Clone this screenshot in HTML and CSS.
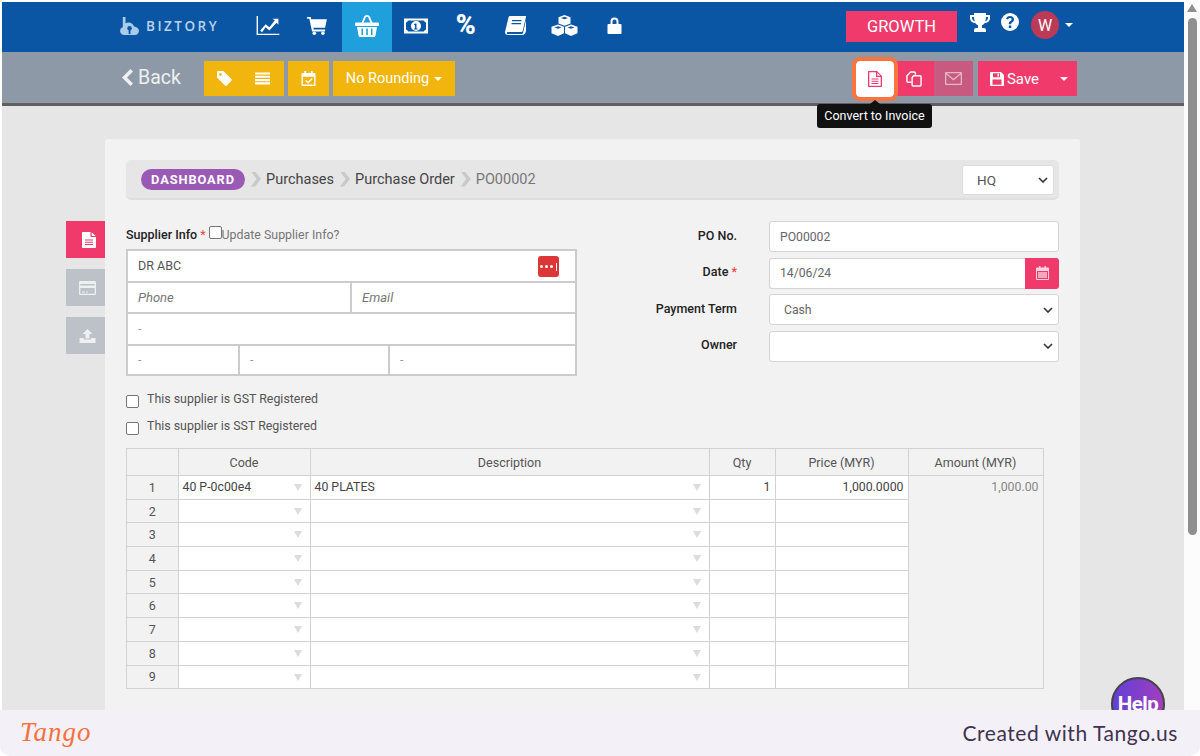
FILE: index.html
```html
<!DOCTYPE html>
<html lang="en">
<head>
<meta charset="utf-8">
<title>Purchase Order PO00002</title>
<link rel="stylesheet" href="styles.css">
</head>
<body>
<div class="frame">
  <div class="viewport">
    <div class="app">
      <header class="topbar">
        <div class="brand">
          <svg class="brand-mark" viewBox="0 0 22 20"><path d="M3 0h3v7a6.500 6.500 0 0 1 9.500 3.500c3 .3 5.500 2.300 5.500 4.800 0 2.500-2 4.700-4.500 4.700h-12C2 20 0 18 0 15.500c0-2 1.300-3.500 3-4z" fill="#a9cde9"/><circle cx="10.500" cy="12.500" r="2.500" fill="#0a56a4"/><path d="M9.500 13.500h2V19h-2z" fill="#0a56a4"/></svg>
          <span class="brand-name">BIZTORY</span>
        </div>
        <nav class="nav">
          <a class="nav-item"><svg class="ic" viewBox="0 0 26 22"><path d="M1 0h1.500v19.500H26V21H1z"/><path d="M5 16l6-7 4 3.500L21 5l-2.500-2H25v6.500L23 7.500l-8 8.500-4-3.500L7 18z"/></svg></a>
          <a class="nav-item"><svg class="ic ic-cart" viewBox="0 0 22 20"><path d="M0 0h4l.7 2.500H22l-2 9.500H7l.4 2H20v2H5.500L2.500 2H0z"/><circle cx="8" cy="18" r="2"/><circle cx="17.500" cy="18" r="2"/></svg></a>
          <a class="nav-item is-active"><svg class="ic ic-basket" viewBox="0 0 24 22"><path d="M6 9l3-7c.5-1 1-2 3-2s2.500 1 3 2l3 7h-2l-2.700-6.500c-.3-.6-.6-.7-1.300-.7s-1 .1-1.300.7L8 9z"/><rect y="7.500" width="24" height="3.500" rx="1"/><path d="M2 12h20l-1.500 8.500c-.2 1-.8 1.500-1.800 1.500H5.300c-1 0-1.600-.5-1.800-1.500zM6.500 13.500v6.500h1.500v-6.500zM11.200 13.500v6.500h1.600v-6.500zM16 13.500v6.500h1.500v-6.500z" fill-rule="evenodd"/></svg></a>
          <a class="nav-item"><svg class="ic ic-money" viewBox="0 0 24 15"><path d="M0 0h24v15H0zM2 4v7a2.500 2.500 0 0 1 2 2h16a2.500 2.500 0 0 1 2-2V4a2.500 2.500 0 0 1-2-2H4a2.500 2.500 0 0 1-2 2zM12 2.500a5 5 0 1 1 0 10 5 5 0 0 1 0-10zM11.500 5l-1.500.8v1l1-.4V10h-1v1h3.500v-1h-1V5z" fill-rule="evenodd"/></svg></a>
          <a class="nav-item"><span class="percent">%</span></a>
          <a class="nav-item"><svg class="ic ic-book" viewBox="0 0 21 19"><path d="M5 0h15.500c.4 0 .6.300.5.700l-3.300 14.300c-.2.700-.7 1-1.300 1H3c-.7 0-1.200.5-1.200 1s.5 1 1.200 1h13.500c.8 0 1.300-.3 1.500-1L21 4v11c-.3 2-1.500 4-4 4H3c-2 0-3-1.200-3-2.800 0-.5.100-1 .3-1.500L3.500 1.500C3.800.6 4.300 0 5 0zM7 4v1.300h9.500V4zM6.500 7v1.300H16V7z" fill-rule="evenodd"/></svg></a>
          <a class="nav-item"><svg class="ic ic-cubes" viewBox="0 0 26 21"><path d="M13 0l6 2.300v6.200l-6 2.300-6-2.300V2.300zM13 1.700l-3.500 1.200L13 4.200l3.500-1.300zM6.500 9.500l6 2.300v6.400L6.500 21 0 18.200v-6.400zM6.500 11.200L3 12.500l3.500 1.300 3.500-1.300zM19.500 9.500l6.500 2.300v6.400L19.500 21l-6-2.800v-6.400zM19.500 11.200L16 12.500l3.500 1.300 3.500-1.300z" fill-rule="evenodd"/></svg></a>
          <a class="nav-item"><svg class="ic ic-lock" viewBox="0 0 14 17"><path d="M3 7V4.500a4 4 0 0 1 8 0V7h2c.6 0 1 .4 1 1v8c0 .6-.4 1-1 1H1c-.6 0-1-.4-1-1V8c0-.6.4-1 1-1zm2 0h4V4.500a2 2 0 0 0-4 0z" fill-rule="evenodd"/></svg></a>
        </nav>
        <div class="account">
          <span class="plan">GROWTH</span>
          <svg class="ic ic-trophy" viewBox="0 0 20 19"><path d="M4 0h12v2h4v3c0 3-2.500 5-5.500 5.300-.6 1-1.400 1.600-2.500 2V15h2c1 0 2 .7 2 2v2H4v-2c0-1.300 1-2 2-2h2v-2.700c-1.100-.4-1.900-1-2.500-2C2.500 10 0 8 0 5V2h4zM2 4v1c0 1.500 1.200 2.800 2.800 3.200C4.300 7 4 5.500 4 4zm14 0c0 1.500-.3 3-.8 4.200C16.800 7.800 18 6.500 18 5V4z" fill-rule="evenodd"/></svg>
          <svg class="ic ic-help" viewBox="0 0 18 18"><path d="M9 0a9 9 0 1 1 0 18A9 9 0 0 1 9 0zM7.800 12.500v2.500h2.500v-2.500zM9 3C6.800 3 5.500 4.200 5 5.800l2 .8c.3-.9.900-1.500 1.900-1.500s1.600.5 1.600 1.300c0 .7-.5 1.100-1.200 1.600-1 .7-1.500 1.400-1.500 2.600v.6h2.400v-.4c0-.6.300-.9.900-1.300 1-.7 1.900-1.500 1.900-3C13 4.300 11.300 3 9 3z" fill-rule="evenodd"/></svg>
          <span class="avatar">W</span>
          <span class="caret caret-light"></span>
        </div>
      </header>

      <div class="toolbar">
        <a class="back"><svg class="back-chev" viewBox="0 0 11 17"><path d="M8.500 0L11 2.500 5 8.500l6 6L8.500 17 0 8.500z"/></svg>Back</a>
        <div class="tool-group">
          <span class="btn btn-yellow btn-pair">
            <svg class="ic-sm" viewBox="0 0 14 14"><path d="M0 1c0-.6.400-1 1-1h5l7.500 7.500c.5.500.5 1.200 0 1.700l-4.300 4.300c-.5.500-1.200.5-1.700 0L0 6zm3.200 1a1.300 1.300 0 1 0 0 2.600 1.300 1.300 0 0 0 0-2.600z" fill-rule="evenodd"/></svg>
            <svg class="ic-sm" viewBox="0 0 16 13"><path d="M0 0h16v2.300H0zM0 3.500h16v2.300H0zM0 7h16v2.300H0zM0 10.500h16V13H0z"/></svg>
          </span>
          <span class="btn btn-yellow btn-cal">
            <svg class="ic-sm" viewBox="0 0 15 16"><path d="M3 0h2v2h5V0h2v2h2c.6 0 1 .4 1 1v12c0 .6-.4 1-1 1H1c-.6 0-1-.4-1-1V3c0-.6.4-1 1-1h2zM1.500 6v8.500h12V6zM11 7.500l1 1-5 5-3-3 1-1 2 2z" fill-rule="evenodd"/></svg>
          </span>
          <span class="btn btn-yellow btn-round">No Rounding<span class="caret caret-light"></span></span>
        </div>
        <div class="action-group">
          <span class="btn btn-convert">
            <svg class="ic-doc" viewBox="0 0 14 16"><path d="M1 0h8l5 5v10c0 .6-.4 1-1 1H1c-.6 0-1-.4-1-1V1c0-.6.4-1 1-1zm.3 1.300v13.400h11.400V6H8V1.300zM9.300 1.800v3h3zM3.500 7.500h7v1h-7zM3.500 9.700h7v1h-7zM3.500 12h7v1h-7z" fill-rule="evenodd"/></svg>
          </span>
          <span class="btn btn-copy">
            <svg class="ic-copy" viewBox="0 0 17 17"><path d="M10 4V2.500A1.500 1.500 0 0 0 8.500 1H5L1 5v6a1 1 0 0 0 1 1h4"/><path d="M11 5H8L6.500 7v8a1 1 0 0 0 1 1H15a1 1 0 0 0 1-1V6a1 1 0 0 0-1-1z"/></svg>
          </span>
          <span class="btn btn-mail">
            <svg class="ic-mail" viewBox="0 0 17 13"><path d="M1 0h15c.6 0 1 .4 1 1v11c0 .6-.4 1-1 1H1c-.6 0-1-.4-1-1V1c0-.6.4-1 1-1zm.8 1.300L8.500 6.800l6.700-5.500zM1.300 2.500v9.200h14.400V2.500L8.500 8.500z" fill-rule="evenodd"/></svg>
          </span>
          <span class="btn btn-save">
            <svg class="ic-save" viewBox="0 0 14 14"><path d="M1 0h10l3 3v10c0 .6-.4 1-1 1H1c-.6 0-1-.4-1-1V1c0-.6.4-1 1-1zm2 1.200v4h7v-4zM7.500 1.800h1.500v2.800H7.500zM2.500 7.500v5.300h9V7.500z" fill-rule="evenodd"/></svg>Save
          </span>
          <span class="btn btn-save-more"><span class="caret caret-light"></span></span>
        </div>
        <div class="tooltip">Convert to Invoice</div>
      </div>

      <main class="stage">
        <aside class="side-tabs">
          <span class="side-tab is-on"><svg class="ic-side" viewBox="0 0 14 16"><path d="M1 0h7.500v5H14v10c0 .6-.4 1-1 1H1c-.6 0-1-.4-1-1V1c0-.6.4-1 1-1zm8.700.3L13.700 4H9.700zM3 7.500v1h8v-1zM3 9.700v1h8v-1zM3 12v1h8v-1z" fill-rule="evenodd"/></svg></span>
          <span class="side-tab"><svg class="ic-side ic-card" viewBox="0 0 17 14"><path d="M1.500 0h14c.8 0 1.500.7 1.500 1.500v11c0 .8-.7 1.500-1.500 1.500h-14C.7 14 0 13.300 0 12.500v-11C0 .7.700 0 1.500 0zM1.300 3v1.500h14.400V3zM1.300 7v5.700h14.400V7zM3 10.500h3v1H3zM7 10.500h2v1H7z" fill-rule="evenodd"/></svg></span>
          <span class="side-tab"><svg class="ic-side ic-card" viewBox="0 0 16 14"><path d="M8 0l5 5h-3v4.500H6V5H3zM0 9h4.500v1.500h7V9H16v5H0z"/></svg></span>
        </aside>
        <section class="card">
          <div class="crumbs">
            <span class="pill">DASHBOARD</span>
            <span class="sep"></span><span class="crumb">Purchases</span>
            <span class="sep"></span><span class="crumb">Purchase Order</span>
            <span class="sep"></span><span class="crumb crumb-cur">PO00002</span>
            <span class="branch">HQ<svg class="chev" viewBox="0 0 10 6"><path d="M1 1l4 4 4-4" /></svg></span>
          </div>

          <div class="form-row">
            <div class="supplier">
              <div class="supplier-head">
                <b class="lbl">Supplier Info</b><span class="req">*</span><span class="check check-tight"></span><span class="hint">Update Supplier Info?</span>
              </div>
              <div class="sbox">
                <div class="srow srow-top"><span class="scell">DR ABC</span><span class="dots"><i></i><i></i><i></i><u></u></span></div>
                <div class="srow"><span class="scell ph w-phone">Phone</span><span class="scell ph">Email</span></div>
                <div class="srow"><span class="scell dash">-</span></div>
                <div class="srow srow-last"><span class="scell dash w-a">-</span><span class="scell dash w-b">-</span><span class="scell dash">-</span></div>
              </div>
              <label class="reg reg-first"><span class="check"></span><span>This supplier is GST Registered</span></label>
              <label class="reg"><span class="check"></span><span>This supplier is SST Registered</span></label>
            </div>
            <div class="meta">
              <div class="meta-row"><b class="lbl meta-lbl">PO No.</b><span class="field">PO00002</span></div>
              <div class="meta-row"><b class="lbl meta-lbl">Date <span class="req">*</span></b><span class="field field-date">14/06/24</span><span class="addon"><svg viewBox="0 0 13 14"><path d="M3 0h1.500v1.500h4V0H10v1.500h2c.6 0 1 .4 1 1V13c0 .6-.4 1-1 1H1c-.6 0-1-.4-1-1V2.500c0-.6.4-1 1-1h2zM1 5v8h11V5z" fill-rule="evenodd"/><path d="M2 6h9v6H2z" opacity=".7"/></svg></span></div>
              <div class="meta-row"><b class="lbl meta-lbl">Payment Term</b><span class="field field-sel">Cash<svg class="chev" viewBox="0 0 10 6"><path d="M1 1l4 4 4-4" /></svg></span></div>
              <div class="meta-row"><b class="lbl meta-lbl">Owner</b><span class="field field-sel"><svg class="chev" viewBox="0 0 10 6"><path d="M1 1l4 4 4-4" /></svg></span></div>
            </div>
          </div>

          <table class="grid">
            <thead>
              <tr><th class="c-no"></th><th class="c-code">Code</th><th class="c-desc">Description</th><th class="c-qty">Qty</th><th class="c-price">Price (MYR)</th><th class="c-amt">Amount (MYR)</th></tr>
            </thead>
            <tbody>
              <tr><td class="no">1</td><td class="dd">40 P-0c00e4</td><td class="dd">40 PLATES</td><td class="num">1</td><td class="num">1,000.0000</td><td class="amt" rowspan="9">1,000.00</td></tr>
              <tr><td class="no">2</td><td class="dd"></td><td class="dd"></td><td></td><td></td></tr>
              <tr><td class="no">3</td><td class="dd"></td><td class="dd"></td><td></td><td></td></tr>
              <tr><td class="no">4</td><td class="dd"></td><td class="dd"></td><td></td><td></td></tr>
              <tr><td class="no">5</td><td class="dd"></td><td class="dd"></td><td></td><td></td></tr>
              <tr><td class="no">6</td><td class="dd"></td><td class="dd"></td><td></td><td></td></tr>
              <tr><td class="no">7</td><td class="dd"></td><td class="dd"></td><td></td><td></td></tr>
              <tr><td class="no">8</td><td class="dd"></td><td class="dd"></td><td></td><td></td></tr>
              <tr><td class="no">9</td><td class="dd"></td><td class="dd"></td><td></td><td></td></tr>
            </tbody>
          </table>
        </section>
        <div class="help-bubble">Help</div>
      </main>
    </div>
    <div class="scrollbar"><span class="sb-up"></span><span class="sb-thumb"></span></div>
  </div>
  <footer class="tango">
    <span class="tango-logo">Tango</span>
    <span class="tango-note">Created with Tango.us</span>
  </footer>
</div>
</body>
</html>
```

FILE: styles.css
```css
* { box-sizing: border-box; }
html, body { margin: 0; height: 100%; overflow: hidden; }
body { background: #fff; font-family: Roboto, "Liberation Sans", sans-serif; color: #333; }

.frame { height: 756px; display: flex; flex-direction: column; }
.viewport { height: 710px; display: flex; padding: 2px 0 0 2px; overflow: hidden; flex: none; }
.app { width: 1182px; flex: none; display: flex; flex-direction: column; position: relative; }

/* scrollbar */
.scrollbar { width: 16px; background: #fcfcfc; display: flex; flex-direction: column; align-items: center; flex: none; margin-top: -2px; padding-top: 4px; }
.sb-up { width: 0; height: 0; border-left: 5px solid transparent; border-right: 5px solid transparent; border-bottom: 8px solid #8f8f8f; }
.sb-thumb { width: 9px; height: 517px; margin-top: 6px; background: #8f8f8f; border-radius: 5px; }

/* top bar */
.topbar { height: 50px; background: #0a56a4; display: flex; align-items: center; padding-left: 118px; flex: none; }
.brand { width: 123px; display: flex; align-items: center; gap: 6px; padding-bottom: 3px; }
.brand-mark { width: 20px; height: 18px; }
.brand-name { font-family: "Open Sans", sans-serif; font-size: 13.500px; font-weight: 600; letter-spacing: 2.500px; color: #b8d4ec; }
.nav { display: flex; height: 100%; }
.nav-item { width: 49.500px; height: 100%; display: flex; align-items: center; justify-content: center; padding-bottom: 3px; }
.nav-item.is-active { background: #1f9fdb; }
.ic { width: 25px; height: 20px; fill: #fff; }
.ic-cart { width: 20px; height: 18px; }
.ic-basket { width: 24px; height: 22px; }
.ic-money { width: 24px; height: 16px; }
.ic-book { width: 21px; height: 19px; }
.ic-cubes { width: 27px; height: 21px; }
.ic-lock { width: 15px; height: 17px; }
.percent { font-family: Roboto, sans-serif; font-size: 27px; font-weight: 900; color: #fff; line-height: 1; }
.account { margin-left: auto; display: flex; align-items: center; margin-right: 111px; }
.plan { width: 111px; height: 31px; background: #ef3a6b; color: #fff; font-size: 16.500px; display: flex; align-items: center; justify-content: center; margin-top: -2px; margin-right: 13px; }
.ic-trophy { width: 20px; height: 19px; margin-right: 11px; margin-top: -10px; }
.ic-help { width: 18px; height: 18px; margin-right: 12px; margin-top: -10px; }
.avatar { width: 28px; height: 28px; border-radius: 50%; background: #bd3a57; color: #fff; font-size: 16px; display: flex; align-items: center; justify-content: center; margin-top: -4px; }
.caret { display: inline-block; width: 0; height: 0; border-left: 4px solid transparent; border-right: 4px solid transparent; border-top: 4px solid #fff; margin-left: 5px; }
.account .caret { margin-left: 6px; margin-top: -4px; }

/* tool bar */
.toolbar { height: 54px; background: #8d99a6; border-bottom: 3px solid #5f5f5f; display: flex; align-items: flex-start; padding: 9px 107px 0 120px; position: relative; flex: none; }
.back { width: 82px; display: flex; align-items: center; gap: 5px; font-size: 19.500px; color: #eef0f2; height: 33px; }
.back-chev { width: 11px; height: 17px; fill: #eef0f2; }
.tool-group { display: flex; gap: 4px; }
.btn { height: 35px; display: flex; align-items: center; justify-content: center; color: #fff; fill: #fff; font-size: 14px; }
.btn-yellow { background: #f2b50d; }
.btn-pair { width: 80px; justify-content: space-between; padding: 0 14px 0 13px; }
.btn-cal { width: 41px; }
.btn-round { width: 122px; font-size: 14.500px; }
.ic-sm { width: 15px; height: 15px; }
.action-group { display: flex; margin-left: auto; position: relative; }
.btn-convert { width: 38px; height: 36px; background: #fff; outline: 4px solid #f9743f; outline-offset: 0; border-radius: 4px; position: relative; z-index: 1; }
.ic-doc { width: 14px; height: 16px; fill: #ef3a6b; }
.btn-copy { width: 40px; background: #ef3a6b; }
.ic-copy { width: 16px; height: 16px; fill: none; stroke: #fff; stroke-width: 1.500; }
.btn-mail { width: 39px; background: #c85a80; }
.ic-mail { width: 17px; height: 13px; fill: #e4b6c6; }
.btn-save { width: 71px; background: #ef3a6b; margin-left: 5px; gap: 3px; font-size: 15px; padding-left: 2px; }
.ic-save { width: 14px; height: 14px; }
.btn-save-more { width: 28px; background: #ef3a6b; padding-left: 1px; }
.btn-save-more .caret { margin: 0; }
.tooltip { position: absolute; left: 815px; top: 52px; width: 115px; height: 24px; background: #111; color: #fff; font-size: 12.500px; border-radius: 3px; display: flex; align-items: center; justify-content: center; z-index: 2; padding-bottom: 2px; }
.tooltip::before { content: ""; position: absolute; left: 53px; top: -4px; width: 0; height: 0; border-left: 5px solid transparent; border-right: 5px solid transparent; border-bottom: 4px solid #111; }

/* stage */
.stage { flex: 1; background: #e6e6e6; display: flex; align-items: flex-start; padding: 33px 0 0 64px; position: relative; overflow: hidden; }
.side-tabs { width: 39px; margin-top: 82px; display: flex; flex-direction: column; gap: 11px; flex: none; }
.side-tab { height: 37px; background: #bcc2c8; display: flex; align-items: center; justify-content: flex-end; padding-right: 9px; }
.side-tab.is-on { background: #ef3a6b; }
.ic-side { width: 14px; height: 16px; fill: #fff; }
.ic-card { width: 17px; height: 14px; fill: #eef0f2; }
.card { width: 975px; height: 640px; flex: none; background: #f2f2f2; border-radius: 3px 3px 0 0; padding: 21px 21px 0; }

.crumbs { height: 40px; background: #e6e6e6; border-radius: 5px; border-bottom: 2px solid #dfdfdf; display: flex; align-items: center; padding: 0 5px 0 15px; }
.pill { width: 104px; height: 21px; background: #9b59b6; color: #fff; border-radius: 11px; font-size: 12.800px; font-weight: 700; letter-spacing: .9px; display: flex; align-items: center; justify-content: center; }
.sep { width: 10px; height: 15px; margin: 0 5px 0 6px; background: #c9c9c9; clip-path: polygon(0 0, 40% 0, 100% 50%, 40% 100%, 0 100%, 55% 50%); }
.crumb { font-size: 14.500px; color: #444; }
.crumb-cur { color: #777; }
.branch { margin-left: auto; margin-top: 2px; width: 92px; height: 30px; background: #fff; border: 1px solid #dcdcdc; border-radius: 3px; font-size: 13.500px; color: #555; display: flex; align-items: center; justify-content: space-between; padding: 0 5px 0 14px; }
.chev { width: 10px; height: 6px; fill: none; stroke: #333; stroke-width: 1.600; margin-left: auto; }

.form-row { display: flex; justify-content: space-between; margin-top: 21px; }
.supplier { width: 451px; }
.supplier-head { height: 26px; margin-bottom: 2px; display: flex; align-items: center; }
.lbl { font-size: 12.500px; font-weight: 500; color: #222; }
.req { color: #e44; font-size: 12.500px; margin-left: 3px; }
.hint { font-size: 12.400px; color: #777; }
.check { width: 13px; height: 13px; border: 1px solid #767676; border-radius: 2px; background: #fff; display: inline-block; flex: none; }
.check-tight { margin-left: 3px; margin-top: -4px; }

.sbox { border: 2px solid #ccc; background: #fff; }
.srow { height: 31.500px; display: flex; border-bottom: 2px solid #ccc; align-items: stretch; position: relative; }
.srow-last { border-bottom: 0; height: 28.500px; }
.scell { flex: 1; font-size: 12.500px; color: #555; display: flex; align-items: center; padding-left: 10px; }
.ph { font-style: italic; color: #777; font-size: 13px; }
.dash { color: #999; }
.w-phone { flex: none; width: 224px; border-right: 2px solid #ccc; }
.w-a { flex: none; width: 112px; border-right: 2px solid #ccc; }
.w-b { flex: none; width: 150px; border-right: 2px solid #ccc; }
.dots { width: 21px; height: 21px; background: #dc3636; border-radius: 3px; position: absolute; right: 16px; top: 5px; display: flex; align-items: center; justify-content: center; gap: 2px; }
.dots i { width: 3px; height: 3px; background: #fff; border-radius: 50%; }
.dots u { width: 1px; height: 8px; background: #fff; margin-left: 1px; }

.reg { display: flex; height: 26.500px; gap: 8px; font-size: 12.400px; color: #555; align-items: flex-start; }
.reg .check { margin-top: 4px; }
.reg-first { margin-top: 15px; }

.meta { width: 419px; display: flex; flex-direction: column; gap: 5.500px; }
.meta-row { display: flex; align-items: center; height: 31px; }
.meta-lbl { width: 97px; text-align: right; margin-right: 32px; margin-top: -3px; }
.meta-lbl .req { margin-left: 0; }
.field { flex: 1; height: 31px; background: #fff; border: 1px solid #d4d4d4; border-radius: 3px; font-size: 12.200px; color: #666; display: flex; align-items: center; padding-left: 10px; }
.field-date { border-radius: 3px 0 0 3px; border-right: 0; }
.field-sel { justify-content: space-between; padding: 0 5px 0 14px; }
.addon { width: 34px; height: 31px; background: #ef3a6b; border-radius: 0 3px 3px 0; display: flex; align-items: center; justify-content: center; flex: none; }
.addon svg { width: 13px; height: 14px; fill: #fbd3df; }

.grid { border-collapse: collapse; table-layout: fixed; width: 916.500px; margin-top: 4px; font-size: 12.300px; }
.grid th, .grid td { border: 1px solid #d2d2d2; padding: 0; }
.grid th { height: 27px; background: #f2f2f2; font-weight: 400; color: #555; font-size: 12.500px; }
.c-no { width: 51.500px; }
.c-code { width: 132px; }
.c-desc { width: 399px; }
.c-qty { width: 66px; }
.c-price { width: 133px; }
.c-amt { width: 135px; }
.grid td { height: 23.700px; background: #fff; color: #444; }
.grid .no { background: #f2f2f2; text-align: center; color: #555; font-size: 12.500px; }
.grid .dd { padding-left: 4px; position: relative; }
.grid .dd::after { content: ""; position: absolute; right: 8px; top: 8px; width: 0; height: 0; border-left: 4px solid transparent; border-right: 4px solid transparent; border-top: 7px solid #dcdcdc; }
.grid .num { text-align: right; padding-right: 4px; }
.grid .amt { background: #f2f2f2; color: #888; text-align: right; vertical-align: top; padding: 4px 4px 0 0; }

.help-bubble { position: absolute; left: 1109px; top: 571px; width: 54px; height: 54px; border-radius: 50%; background: linear-gradient(100deg, #5f3fd8, #a83fbb); border: 2px solid #444; color: #fff; font-size: 20.500px; font-weight: 700; display: flex; align-items: center; justify-content: center; letter-spacing: -.5px; }

/* footer */
.tango { height: 46px; background: #f3f1f7; border-radius: 0 0 10px 10px; display: flex; align-items: center; justify-content: space-between; padding: 0 22px 2px 20px; flex: none; }
.tango-logo { font-family: "Liberation Serif", serif; font-style: italic; font-size: 27px; color: #f9703e; letter-spacing: 1px; font-weight: 400; }
.tango-note { font-family: Lato, sans-serif; font-size: 21px; color: #3f3350; letter-spacing: .55px; }
```
